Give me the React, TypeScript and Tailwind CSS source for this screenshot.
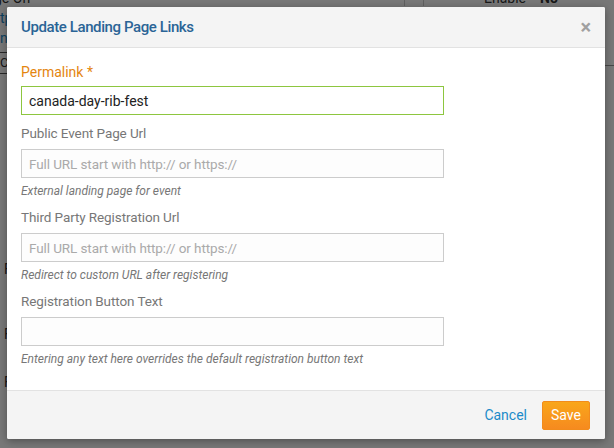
import React from 'react';

const fields = [
  {
    label: 'Public Event Page Url',
    placeholder: 'Full URL start with http:// or https://',
    help: 'External landing page for event',
  },
  {
    label: 'Third Party Registration Url',
    placeholder: 'Full URL start with http:// or https://',
    help: 'Redirect to custom URL after registering',
  },
  {
    label: 'Registration Button Text',
    placeholder: '',
    help: 'Entering any text here overrides the default registration button text',
  },
];

export default function App() {
  return (
    <div className="relative h-[448px] w-[614px] overflow-hidden bg-white font-['Roboto',sans-serif] text-[#333]">
      {/* page behind the modal */}
      <div className="flex h-full flex-col text-[14px]">
        <div className="-mt-[12px] flex h-[18px] items-start">
          <span className="-ml-[6px] w-[410px]">ge On</span>
          <span className="h-[18px] w-[20px] border-x border-[#ccc]" />
          <span className="ml-[60px] w-[56px]">Enable</span>
          <span className="font-bold">No</span>
        </div>
        <div className="flex">
          <div className="flex w-[30px] flex-col">
            <span className="mt-[2px] leading-[20px] text-[#1b8bc9]">tp</span>
            <span className="leading-[20px] text-[#1b8bc9]">n</span>
            <span className="mt-[4px] border-y border-[#555] text-[13px] leading-[20px]">Co</span>
            <span className="mt-[185px] pl-[4px] leading-[20px]">F</span>
            <span className="mt-[45px] pl-[4px] leading-[20px]">F</span>
            <span className="mt-[28px] pl-[4px] leading-[20px]">F</span>
          </div>
          <div className="ml-auto mt-[59px] h-0 w-[20px] border-t border-[#999]" />
        </div>
      </div>
      <div className="absolute inset-0 bg-black/[0.53]" />

      {/* modal */}
      <div className="absolute left-[7px] top-[7px] flex h-[432px] w-[598px] flex-col overflow-hidden rounded-[2px] bg-white shadow-[0_2px_8px_rgba(0,0,0,0.35)]">
        <div className="flex h-[41px] items-center justify-between border-b border-[#e2e2e2] bg-[#f4f4f4] px-[14px]">
          <h4 className="text-[15px] font-medium tracking-[-0.4px] text-[#2a6496]">Update Landing Page Links</h4>
          <button className="text-[20px] font-bold leading-none text-[#a0a0a0]">×</button>
        </div>

        <div className="flex-1 px-[14px] pt-[14px]">
          <label className="block text-[14px] leading-[20px] text-[#e4860f]">Permalink *</label>
          <input
            defaultValue="canada-day-rib-fest"
            className="mt-[4px] block h-[29px] w-[423px] border border-[#8dc63f] px-[7px] text-[14px] text-[#222] outline-none"
          />
          {fields.map((f) => (
            <div key={f.label} className="mt-[8px]">
              <label className="block text-[13.5px] leading-[20px] tracking-[-0.1px] text-[#777]">{f.label}</label>
              <input
                placeholder={f.placeholder}
                className="mt-[6px] block h-[29px] w-[423px] border border-[#ccc] bg-[#fdfdfd] px-[7px] text-[13.5px] tracking-[-0.1px] outline-none placeholder:text-[#aaa]"
              />
              <p className="mt-[5px] text-[12px] italic leading-[16px] text-[#777]">{f.help}</p>
            </div>
          ))}
        </div>

        <div className="flex h-[49px] items-center justify-end gap-[15px] border-t border-[#e2e2e2] bg-[#f4f4f4] pr-[15px]">
          <button className="text-[14px] text-[#1b8bc9]">Cancel</button>
          <button className="h-[29px] w-[48px] rounded-[2px] border border-[#f28c1c] bg-gradient-to-b from-[#f9a61a] to-[#f68a1f] text-[14px] text-white">
            Save
          </button>
        </div>
      </div>
    </div>
  );
}
